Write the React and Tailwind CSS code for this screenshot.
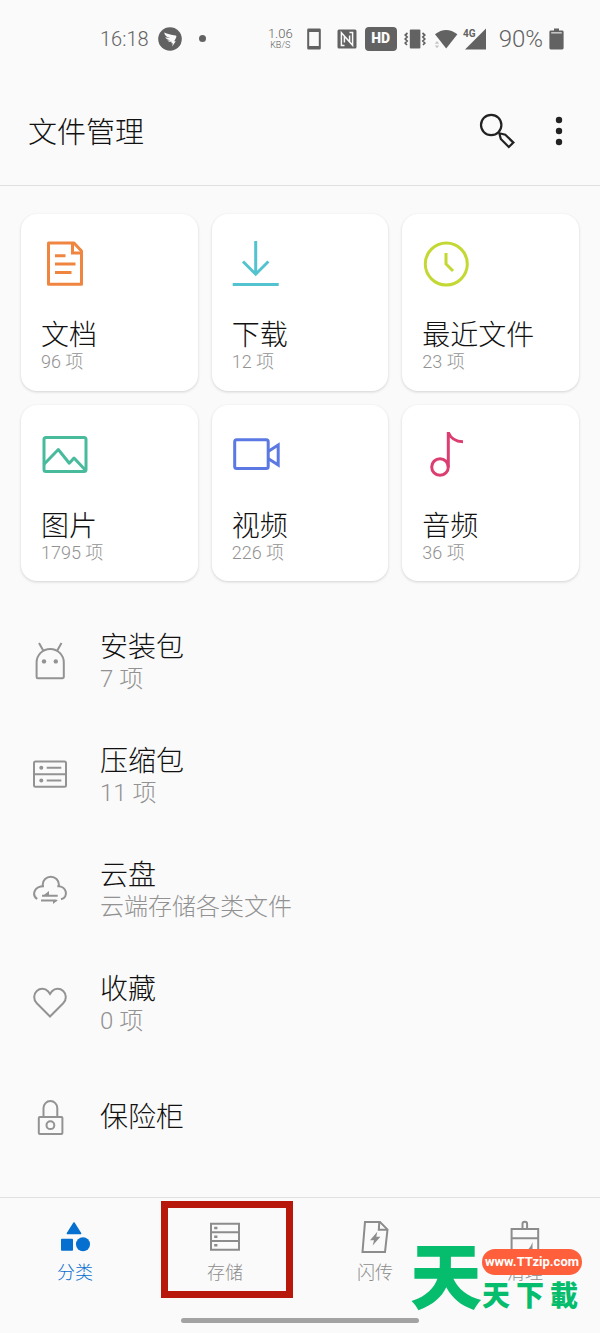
import { useState } from "react";
import clsx from "clsx";

/* ---------- Category icons (48 x 48) ---------- */

const DocIcon = () => (
    <svg viewBox="0 0 48 48" className="w-12 h-12" fill="none" stroke="#f08540" strokeWidth="3">
        <path d="M7.5 3H33L40.5 11V44.2H7.5Z" strokeLinejoin="round" />
        <path d="M31.5 3V13H40.5M14 15.7H24.5M14 24H34.5M14 32.4H30.5" />
    </svg>
);

const DownloadIcon = () => (
    <svg viewBox="0 0 48 48" className="w-12 h-12" fill="none" stroke="#53c4cf" strokeWidth="3">
        <path d="M23.7 1V34M11 21.5L23.7 34.2L36.4 21.5M0.7 44.6H46.7" />
    </svg>
);

const RecentIcon = () => (
    <svg viewBox="0 0 48 48" className="w-12 h-12" fill="none" stroke="#c3d832" strokeWidth="3">
        <circle cx="24.3" cy="24" r="21" />
        <path d="M24 13V24L31 31" />
    </svg>
);

const ImageIcon = () => (
    <svg viewBox="0 0 48 48" className="w-12 h-12" fill="none" stroke="#48bb9d" strokeWidth="3">
        <rect x="3" y="6.5" width="42" height="34" rx="2" />
        <path d="M2.8 33.5L17.3 18.5L28.3 32.2L33 27L45 39.7" strokeLinejoin="round" />
    </svg>
);

const VideoIcon = () => (
    <svg viewBox="0 0 48 48" className="w-12 h-12" fill="none" stroke="#5b78e3" strokeWidth="3">
        <rect x="2.7" y="8.8" width="33.5" height="28.8" rx="2" />
        <path d="M36.5 20.3L46.2 14V34L36.5 27.7" />
    </svg>
);

const AudioIcon = () => (
    <svg viewBox="0 0 48 48" className="w-12 h-12" fill="none" stroke="#dc3e71" strokeWidth="3">
        <circle cx="18" cy="36" r="8.3" />
        <path d="M26.3 36V1" />
        <path d="M26.3 1.5C28.5 7 34 10.5 41 10.7" />
    </svg>
);

/* ---------- List icons (36 x 36) ---------- */

const AndroidIcon = () => (
    <svg viewBox="0 0 36 36" className="w-9 h-9 overflow-visible" fill="none" stroke="#939393" strokeWidth="2">
        <path d="M4.6 33V18.5A13.6 13.6 0 0 1 31.8 18.5V33A1.2 1.2 0 0 1 30.6 34.2H5.8A1.2 1.2 0 0 1 4.6 33Z" />
        <path d="M7 -1L11.5 7M29.5 -1L25 7" />
        <circle cx="12" cy="17.4" r="2.2" fill="#939393" stroke="none" />
        <circle cx="23.8" cy="17.4" r="2.2" fill="#939393" stroke="none" />
    </svg>
);

const ArchiveIcon = () => (
    <svg viewBox="0 0 36 36" className="w-9 h-9" fill="none" stroke="#939393" strokeWidth="2">
        <rect x="2" y="3.6" width="32" height="25.2" rx="1.5" />
        <path d="M2 16.2H34M14.7 9.8H29.3M14.7 22.4H29.3" />
        <circle cx="9.3" cy="9.8" r="2" fill="#939393" stroke="none" />
        <circle cx="9.3" cy="22.4" r="2" fill="#939393" stroke="none" />
    </svg>
);

const CloudIcon = () => (
    <svg viewBox="0 0 36 36" className="w-9 h-9" fill="none" stroke="#939393" strokeWidth="2">
        <path d="M5.2 27C0 23.5 1.2 14.2 12 14.2" />
        <path d="M10.7 14.5V12.8A8.1 8.1 0 0 1 26.9 12.8V14.6" />
        <path d="M25.3 14.2C35 13.5 37 25.5 29 27.3" />
        <path d="M10 23.8H25.7M9 28.4H24.5" />
        <path d="M11 23.8L17 19V23.8ZM26 28L21 32V28Z" fill="#939393" stroke="none" />
    </svg>
);

const HeartIcon = () => (
    <svg viewBox="0 0 36 36" className="w-9 h-9" fill="none" stroke="#939393" strokeWidth="2">
        <path d="M18 30.5L4.8 17.3C1.3 13.6 1.3 8 4.8 4.9C8.2 1.8 13 2.1 16 5.2L18 8L20 5.2C23 2.1 27.8 1.8 31.2 4.9C34.7 8 34.7 13.6 31.2 17.3Z" />
    </svg>
);

const LockIcon = () => (
    <svg viewBox="0 0 36 36" className="w-9 h-9" fill="none" stroke="#939393" strokeWidth="2">
        <path d="M11.5 17V8A6.9 6.9 0 0 1 25.3 8V17" />
        <rect x="6.8" y="17" width="23.6" height="17" rx="1" />
        <circle cx="18.4" cy="25.2" r="3.9" />
    </svg>
);

/* ---------- Tab icons (36 x 36) ---------- */

const ShapesIcon = () => (
    <svg viewBox="0 0 36 36" className="w-9 h-9" fill="currentColor">
        <path d="M17 4L23.6 14.5H10.4Z" stroke="currentColor" strokeWidth="1.5" strokeLinejoin="round" />
        <rect x="4" y="19.7" width="12" height="12" rx="0.8" />
        <circle cx="26" cy="25.2" r="7" />
    </svg>
);

const StorageIcon = () => (
    <svg viewBox="0 0 36 36" className="w-9 h-9" fill="none" stroke="currentColor" strokeWidth="2">
        <path d="M4 4.7H32V30.7H4ZM4 13.3H32M4 22H32" />
        <path d="M7.2 9H10.4M7.2 17.7H10.4M7.2 26.3H10.4" strokeWidth="2.4" />
    </svg>
);

const FlashIcon = () => (
    <svg viewBox="0 0 36 36" className="w-9 h-9" fill="none" stroke="currentColor" strokeWidth="2">
        <path d="M8 3H23L30.5 10.5L28 33H5.5Z" />
        <path d="M22.3 3L21.8 10.8H30.5" />
        <path d="M20.3 12.7L13 21.2H17L15.7 26.6L23.4 17.8H19.3Z" fill="currentColor" stroke="none" />
    </svg>
);

const BrushIcon = () => (
    <svg viewBox="0 0 36 36" className="w-9 h-9" fill="none" stroke="currentColor" strokeWidth="2">
        <path d="M15.5 10V5A2.3 2.3 0 0 1 20.1 5V10" />
        <path d="M4.6 10H31.2V34H4.6ZM4.6 19.3H31.2" />
        <path d="M25.5 23V34H17C21 31 24 28 25.5 23Z" fill="currentColor" stroke="none" />
    </svg>
);

/* ---------- Status bar ---------- */

const StatusBar = () => (
    <div className="flex items-center h-[77px] pl-[100px] pr-9 text-[#626262] font-['Roboto',sans-serif] font-light">
        <span className="w-[58px] text-[20px] leading-6">16:18</span>
        <svg viewBox="0 0 24 24" className="w-6 h-6">
            <circle cx="12" cy="12" r="11.8" fill="#626262" />
            <path d="M6.2 5.4C9.5 7 13 7.6 17.6 8.4C18.6 8.7 18.5 9.6 18.1 10.5C17.5 12 17 12.9 16.2 14.2H17.8L14.2 19.6L14.8 16.2H13.2L13.8 14.7C11.8 15.1 10.3 14.7 9.4 13.5C10.4 13.7 11.3 13.6 12.2 13.4C9.8 12.9 8 12 7.2 10.1C8.8 10.8 10.2 11 12 11.1C8.6 10 6.6 8.4 6.2 5.4Z" fill="#fafafa" />
        </svg>
        <span className="w-[7px] h-[7px] ml-[17px] rounded-full bg-[#626262]" />

        <div className="flex items-center ml-auto">
            <div className="flex flex-col items-center">
                <span className="text-[13px] leading-[13px]">1.06</span>
                <span className="text-[9px] leading-[10px]">KB/S</span>
            </div>
            <svg viewBox="0 0 14 22" className="w-[14px] h-[22px] ml-[14px]">
                <path d="M1.5 0.5H12.5A1.3 1.3 0 0 1 13.8 1.8V20.2A1.3 1.3 0 0 1 12.5 21.5H1.5A1.3 1.3 0 0 1 0.2 20.2V1.8A1.3 1.3 0 0 1 1.5 0.5ZM2.2 4V18H11.8V4Z" fill="#626262" fillRule="evenodd" />
            </svg>
            <svg viewBox="0 0 20 20" className="w-5 h-5 ml-4">
                <rect x="0.5" y="0.5" width="19" height="19" rx="1.5" fill="#626262" />
                <path d="M7.5 16.5H4.4V3.8L15.6 16.2V3.5H12.5M7.4 13.5V7.2M12.6 6.5V12.8" fill="none" stroke="#fafafa" strokeWidth="1.5" />
            </svg>
            <span className="flex items-center justify-center w-8 h-6 ml-2 rounded bg-[#626262] text-[#fafafa] text-[14px] font-black">HD</span>
            <svg viewBox="0 0 22 20" className="w-[22px] h-5 ml-[7px]">
                <rect x="5.8" y="0.5" width="10.6" height="19" rx="1" fill="#626262" />
                <path d="M3.5 4L1.2 6L3.2 8L1.2 10L3.2 12L1.2 14L3 16M18.5 4L20.8 6L18.8 8L20.8 10L18.8 12L20.8 14L19 16" fill="none" stroke="#626262" strokeWidth="1.7" />
            </svg>
            <svg viewBox="0 0 24 20" className="w-6 h-5 ml-2">
                <path d="M1 5.3Q12 -3.5 23.4 5.3L12.2 19.5Z" fill="#626262" />
                <path d="M0.8 14.8L3 12L5.2 14.8ZM0.8 16.4L3 19.2L5.2 16.4Z" fill="#c4c4c4" />
            </svg>
            <svg viewBox="0 0 22 22" className="w-[22px] h-[22px] ml-[6px] overflow-visible">
                <path d="M22 0.5V21.5H1Z" fill="#626262" />
                <text x="-1" y="8.5" fontSize="10" fontWeight="700" fill="#626262">4G</text>
            </svg>
            <span className="ml-[13px] text-[24px] leading-6">90%</span>
            <svg viewBox="0 0 15 22" className="w-[15px] h-[22px] ml-[6px]">
                <path d="M5 0.5H10V2.5H13.2A1.4 1.4 0 0 1 14.6 3.9V20.1A1.4 1.4 0 0 1 13.2 21.5H1.8A1.4 1.4 0 0 1 0.4 20.1V3.9A1.4 1.4 0 0 1 1.8 2.5H5Z" fill="#626262" />
                <path d="M2.2 4H12.8V5.6H2.2Z" fill="#c4c4c4" />
            </svg>
        </div>
    </div>
);

const categories = [
    { name: "文档", count: "96 项", Icon: DocIcon },
    { name: "下载", count: "12 项", Icon: DownloadIcon },
    { name: "最近文件", count: "23 项", Icon: RecentIcon },
    { name: "图片", count: "1795 项", Icon: ImageIcon },
    { name: "视频", count: "226 项", Icon: VideoIcon },
    { name: "音频", count: "36 项", Icon: AudioIcon },
];

const entries = [
    { name: "安装包", detail: "7 项", Icon: AndroidIcon },
    { name: "压缩包", detail: "11 项", Icon: ArchiveIcon },
    { name: "云盘", detail: "云端存储各类文件", Icon: CloudIcon },
    { name: "收藏", detail: "0 项", Icon: HeartIcon },
    { name: "保险柜", Icon: LockIcon },
];

const tabs = [
    { id: "category", name: "分类", Icon: ShapesIcon },
    { id: "storage", name: "存储", Icon: StorageIcon, highlighted: true },
    { id: "flash", name: "闪传", Icon: FlashIcon },
    { id: "clean", name: "清理", Icon: BrushIcon },
];

const SiteBadge = () => (
    <div className="absolute right-[18px] bottom-[18px] flex items-end pointer-events-none text-[#06bd6d] font-black">
        <span className="text-[72px] leading-[72px]">天</span>
        <div className="flex flex-col pb-[2px]">
            <span className="flex items-center justify-center w-[100px] h-[26px] rounded-full bg-[#ff5f3b] text-white text-[13px] font-bold font-['Roboto',sans-serif]">
                www.TTzip.com
            </span>
            <span className="flex gap-[6px] mt-[6px] text-[28px] leading-[32px]">
                <span>天</span>
                <span>下</span>
                <span>載</span>
            </span>
        </div>
    </div>
);

const App = () => {
    const [activeTab, setActiveTab] = useState("category");

    return (
        <div className="relative flex flex-col min-h-screen bg-[#fafafa] text-[#111111] font-['Roboto','Noto_Sans_CJK_SC',sans-serif] font-light">
            <StatusBar />

            {/* Header */}
            <header className="flex items-center h-[109px] pl-7 pr-[33px] border-b border-[#e0e0e0]">
                <h1 className="flex-1 pt-1 text-[29px] leading-9">文件管理</h1>
                <button aria-label="搜索" className="w-9 h-9">
                    <svg viewBox="0 0 36 36" className="w-9 h-9" fill="none" stroke="#222222" strokeWidth="2.2">
                        <circle cx="12.2" cy="12" r="10.2" />
                        <path d="M20.3 20.2L26.3 21.8L34.4 29.6L29.8 34L21.8 26Z" />
                    </svg>
                </button>
                <button aria-label="更多" className="w-4 h-9 ml-9">
                    <svg viewBox="0 0 16 36" className="w-4 h-9" fill="#222222">
                        <circle cx="8" cy="7" r="3.2" />
                        <circle cx="8" cy="18" r="3.2" />
                        <circle cx="8" cy="29" r="3.2" />
                    </svg>
                </button>
            </header>

            <main className="flex-1">
                {/* Categories */}
                <div className="grid grid-cols-3 gap-[14px] px-[21px] pt-7">
                    {categories.map(({ name, count, Icon }) => (
                        <button
                            key={name}
                            className="flex flex-col items-start aspect-square pl-5 pt-[26px] text-left bg-white rounded-2xl shadow-[0_1px_3px_rgba(0,0,0,0.16)]"
                        >
                            <Icon />
                            <span className="mt-8 text-[28px] leading-8">{name}</span>
                            <span className="text-[18px] leading-5 text-[#929292]">{count}</span>
                        </button>
                    ))}
                </div>

                {/* Entries */}
                <ul className="pt-6">
                    {entries.map(({ name, detail, Icon }) => (
                        <li key={name}>
                            <button className="flex items-center w-full h-[114px] gap-8 pl-8 text-left">
                                <Icon />
                                <span className="flex flex-col">
                                    <span className="text-[28px] leading-[34px]">{name}</span>
                                    {detail && (
                                        <span className="text-[24px] leading-7 text-[#929292]">{detail}</span>
                                    )}
                                </span>
                            </button>
                        </li>
                    ))}
                </ul>
            </main>

            {/* Tabs */}
            <nav className="grid grid-cols-4 border-t border-[#e0e0e0] pb-[10px]">
                {tabs.map(({ id, name, Icon, highlighted }) => (
                    <button
                        key={id}
                        onClick={() => setActiveTab(id)}
                        className={clsx(
                            "relative flex flex-col items-center h-[110px] pt-[21px]",
                            activeTab === id ? "text-[#0670d0]" : "text-[#8c8c8c]"
                        )}
                    >
                        <Icon />
                        <span className="mt-[6px] text-[18px] leading-6">{name}</span>
                        {highlighted && (
                            <span className="absolute left-[11px] right-[7px] top-[3px] bottom-[10px] border-[7px] border-[#b8170b]" />
                        )}
                    </button>
                ))}
            </nav>

            {/* Home indicator */}
            <div className="w-[238px] h-[5px] mx-auto mb-[10px] rounded-full bg-[#a3a3a3]" />

            <SiteBadge />
        </div>
    );
};

export default App;
